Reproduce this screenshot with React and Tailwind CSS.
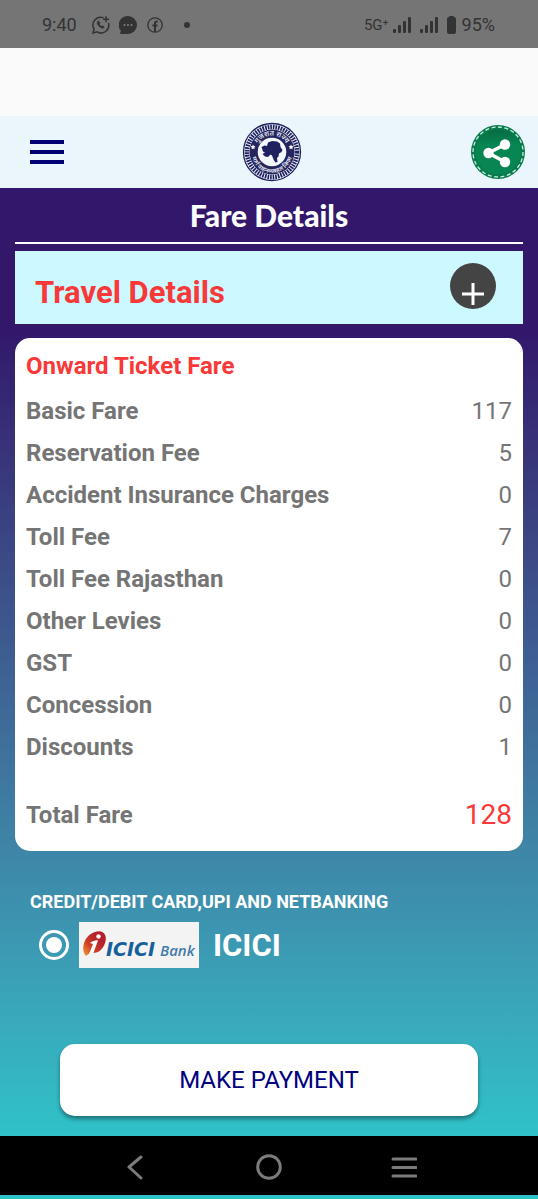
import React, { useState } from "react";

const fares = [
  { label: "Basic Fare", amount: 117 },
  { label: "Reservation Fee", amount: 5 },
  { label: "Accident Insurance Charges", amount: 0 },
  { label: "Toll Fee", amount: 7 },
  { label: "Toll Fee Rajasthan", amount: 0 },
  { label: "Other Levies", amount: 0 },
  { label: "GST", amount: 0 },
  { label: "Concession", amount: 0 },
  { label: "Discounts", amount: 1 },
];

const Signal = () => (
  <svg width="18" height="16" viewBox="0 0 18 16" fill="#333">
    <rect x="0" y="12" width="3" height="4" rx="1" />
    <rect x="5" y="8" width="3" height="8" rx="1" />
    <rect x="10" y="4" width="3" height="12" rx="1" />
    <rect x="15" y="0" width="3" height="16" rx="1" />
  </svg>
);

const StatusBar = () => {
  return (
    <div className="flex h-12 items-center justify-between bg-[#757575] pl-[42px] pr-[43px] pt-[2px] text-[#333]">
      <div className="flex items-center">
        <span className="w-[50px] text-lg">9:40</span>
        <svg width="18" height="18" viewBox="0 0 18 18" fill="none" stroke="#333" strokeWidth="1.5" strokeLinecap="round">
          <path d="M11 1.6A7.8 7.8 0 0 0 2 13L1 17l4-1.1A7.8 7.8 0 0 0 16.6 7.5" />
          <path d="M14 .8v5M11.5 3.3h5" />
          <path d="M6 5c-1.5 1-.8 3.3 1 5.2s4.2 2.6 5.2 1l-1.8-1.5-1 .8C8.3 10 7.5 9 7.2 8l.8-.9z" fill="#333" strokeWidth="0.8" />
        </svg>
        <svg className="ml-[9px]" width="18" height="18" viewBox="0 0 18 18">
          <path d="M9 0a9 9 0 1 1 0 18H2c-1 0-1-1-.6-2l.6-1A9 9 0 0 1 9 0z" fill="#333" />
          <g fill="#858585">
            <circle cx="5.5" cy="9" r="1" />
            <circle cx="9" cy="9" r="1" />
            <circle cx="12.5" cy="9" r="1" />
          </g>
        </svg>
        <svg className="ml-[10px]" width="16" height="16" viewBox="0 0 16 16" fill="none" stroke="#333">
          <circle cx="8" cy="8" r="7.2" strokeWidth="1.3" />
          <path d="M8 15V6.5C8 5 8.8 4.4 10.7 4.6M5.5 8.5h5" strokeWidth="2" />
        </svg>
        <span className="ml-[21px] h-[6px] w-[6px] rounded-full bg-[#333]" />
      </div>
      <div className="flex items-center">
        <span className="mr-1 text-[15px]">5G⁺</span>
        <Signal />
        <span className="w-[9px]" />
        <Signal />
        <svg className="ml-[9px] mr-[6px]" width="9" height="18" viewBox="0 0 9 18" fill="#333">
          <rect x="2" y="0" width="5" height="3" rx="1" />
          <rect y="1" width="9" height="17" rx="2" />
        </svg>
        <span className="text-lg">95%</span>
      </div>
    </div>
  );
};

// round seal with text set along two arcs
const Seal = () => (
  <svg width="60" height="60" viewBox="0 0 60 60">
    <defs>
      <path id="sealTop" d="M13.5 30a16.5 16.5 0 0 1 33 0" />
      <path id="sealBottom" d="M9.8 27a20.5 20.5 0 1 0 40.4 0" />
    </defs>
    <circle cx="30" cy="30" r="28.5" fill="#f4f8fc" stroke="#1f2060" strokeWidth="1.3" />
    <circle cx="30" cy="30" r="25" fill="none" stroke="#1f2060" strokeWidth="4.5" strokeDasharray="1.7 0.92" />
    <circle cx="30" cy="30" r="22.5" fill="#25265f" />
    <g fill="#e9eef6" fontSize="7" fontWeight="600" fontFamily="Noto Sans, sans-serif">
      <text textAnchor="middle"><textPath href="#sealTop" startOffset="50%">गुजरात राज्य</textPath></text>
      <text textAnchor="middle" fontSize="6"><textPath href="#sealBottom" startOffset="50%">मार्ग वाहनव्यवहार निगम</textPath></text>
    </g>
    <circle cx="30" cy="30" r="14.3" fill="#f4f8fc" />
    <path d="M19.5 25l3-1.5 2.5.5 1-3.5 4-1.5 5 .5 3 2 .5 3.5 2 3-1 2-2.5 1.5-.5 3-1.5 1.5.5 4-2 .5-2-3-1.5-4-1.5-1-2.500 2.5-3-.5-2.500-2.500 2.500-1.500-2-1z" fill="#1f2060" />
    <path d="M11 22.5l.8 1.6 1.7.2-1.2 1.2.3 1.7-1.6-.8-1.5.8.3-1.7-1.2-1.2 1.7-.2zM49 22.5l.8 1.6 1.7.2-1.2 1.2.3 1.7-1.6-.8-1.5.8.3-1.7-1.2-1.2 1.7-.2z" fill="#fff" />
  </svg>
);

const ShareIcon = () => (
  <svg width="54" height="54" viewBox="0 0 54 54">
    <defs>
      <linearGradient id="shareShade" x2="0" y2="1">
        <stop offset="0" stopColor="#066b42" />
        <stop offset=".35" stopColor="#078653" />
        <stop offset="1" stopColor="#078653" />
      </linearGradient>
    </defs>
    <circle cx="27" cy="27" r="27" fill="#087a4c" />
    <circle cx="27" cy="27" r="25" fill="none" stroke="#c9f1df" strokeWidth="1.3" strokeDasharray="4 2.5" />
    <circle cx="27" cy="27" r="22.5" fill="url(#shareShade)" />
    <path d="M34 19.5L17.5 28 34 37" fill="none" stroke="#fff" strokeWidth="3.5" />
    <circle cx="34" cy="19.5" r="5.2" fill="#fff" />
    <circle cx="17.5" cy="28" r="5.2" fill="#fff" />
    <circle cx="34" cy="37" r="5.2" fill="#fff" />
  </svg>
);

const IciciLogo = () => (
  <svg className="shrink-0" width="120" height="46" viewBox="0 0 120 46">
    <defs>
      <linearGradient id="flame" x1="1" y1="0" x2="0" y2="1">
        <stop offset=".3" stopColor="#b3202b" />
        <stop offset=".65" stopColor="#cf4026" />
        <stop offset="1" stopColor="#f6a33b" />
      </linearGradient>
    </defs>
    <rect width="120" height="46" fill="#f3f3f4" />
    <path d="M7 34C1 28 5 13 16 10c8-3 13 3 10 11-2 6-6 10-12 10-3 0-5 1-7 3z" fill="url(#flame)" />
    <circle cx="19.5" cy="14.5" r="2.2" fill="#fff" />
    <path d="M11 21c3-2 6-3 8-2.500L14 32h-4l4-10z" fill="#fff" />
    <text x="27" y="34" fill="#17609b" fontSize="19" fontWeight="700" fontStyle="italic" fontFamily="DejaVu Sans, sans-serif">ICICI</text>
    <text x="81" y="34" fill="#437caa" fontSize="15" fontWeight="600" fontStyle="italic" fontFamily="Open Sans, sans-serif">Bank</text>
  </svg>
);

const App = () => {
  const [open, setOpen] = useState(false);

  return (
    <div className="flex min-h-screen flex-col bg-[#fafafa] font-[Roboto,sans-serif]">
      <StatusBar />
      <header className="mt-[68px] grid h-[72px] grid-cols-3 items-center bg-[#eaf6fc] pl-[30px] pr-[13px]">
        <button aria-label="Menu" className="flex w-[34px] flex-col gap-[6px]">
          <span className="h-1 w-full bg-[#000072]" />
          <span className="h-1 w-full bg-[#000072]" />
          <span className="h-1 w-full bg-[#000072]" />
        </button>
        <div className="mr-3 justify-self-center"><Seal /></div>
        <button aria-label="Share" className="justify-self-end"><ShareIcon /></button>
      </header>

      <main className="flex grow flex-col bg-linear-to-b from-[#32176b] from-15% to-[#2fc2c8] px-[15px] pb-5">
        <h1 className="border-b-2 border-white pb-[10px] pt-[11px] text-center font-[Lato,sans-serif] text-[30px] font-black leading-[33px] text-white">Fare Details</h1>

        <section className="mt-[7px] flex h-[73px] items-start justify-between bg-[#ccf9ff] pl-5 pr-[27px]">
          <h2 className="pt-[22px] text-[31px] font-bold leading-10 text-[#f93838]">Travel Details</h2>
          <button aria-label="Show travel details" onClick={() => setOpen(!open)} className="mt-3 flex h-[46px] w-[46px] justify-center rounded-full bg-[#444] pt-5">
            <svg width="22" height="22" viewBox="0 0 22 22" stroke="#fff" strokeWidth="3">
              <path d={open ? "M0 11h22" : "M11 0v22M0 11h22"} />
            </svg>
          </button>
        </section>

        <section className="mt-[14px] rounded-[15px] bg-white px-[11px] pb-[18px] pt-[10px]">
          <table className="w-full text-2xl text-[#757575]">
            <caption className="pb-[6px] text-left font-bold leading-9 text-[#f93838]">Onward Ticket Fare</caption>
            <tbody>
              {fares.map((fare) => (
                <tr key={fare.label} className="h-[42px]">
                  <th scope="row" className="text-left font-bold">{fare.label}</th>
                  <td className="text-right">{fare.amount}</td>
                </tr>
              ))}
            </tbody>
            <tfoot>
              <tr className="h-[65px] align-bottom">
                <th scope="row" className="text-left font-bold leading-9">Total Fare</th>
                <td className="text-right text-[28px] leading-9 text-[#f93838]">128</td>
              </tr>
            </tfoot>
          </table>
        </section>

        <section className="mt-[39px] pl-[15px] text-white">
          <h3 className="text-lg font-bold leading-6">CREDIT/DEBIT CARD,UPI AND NETBANKING</h3>
          <label className="mt-[7px] flex items-center pl-[9px]">
            <input type="radio" name="bank" value="icici" defaultChecked className="grid h-[30px] w-[30px] shrink-0 appearance-none place-items-center rounded-full border-3 border-white before:h-4 before:w-4 before:rounded-full before:content-[''] checked:before:bg-white" />
            <span className="ml-[10px] mr-[14px]"><IciciLogo /></span>
            <span className="pt-[2px] text-[31px] font-bold">ICICI</span>
          </label>
        </section>

        <button className="mx-[45px] mt-auto h-[72px] rounded-[15px] bg-white text-2xl text-[#000080] shadow-[0_3px_4px_rgba(0,0,0,0.4)]">MAKE PAYMENT</button>
      </main>

      <nav className="grid h-[63px] grid-cols-3 items-center justify-items-center border-b-4 border-[#2fc2c8] bg-black px-[12.5%] pt-[3px]">
        <button aria-label="Back">
          <svg width="26" height="26" viewBox="0 0 26 26" fill="none" stroke="#7b7b7b" strokeWidth="3" strokeLinecap="round" strokeLinejoin="round">
            <path d="M19 3L7 13l12 11" />
          </svg>
        </button>
        <button aria-label="Home">
          <svg width="26" height="26" viewBox="0 0 26 26" fill="none" stroke="#7b7b7b" strokeWidth="3">
            <circle cx="13" cy="13" r="11.3" />
          </svg>
        </button>
        <button aria-label="Recent apps">
          <svg width="26" height="26" viewBox="0 0 26 26" stroke="#7b7b7b" strokeWidth="3" strokeLinecap="round">
            <path d="M2 5h23M2 13.5h23M2 22h23" />
          </svg>
        </button>
      </nav>
    </div>
  );
};

export default App;
